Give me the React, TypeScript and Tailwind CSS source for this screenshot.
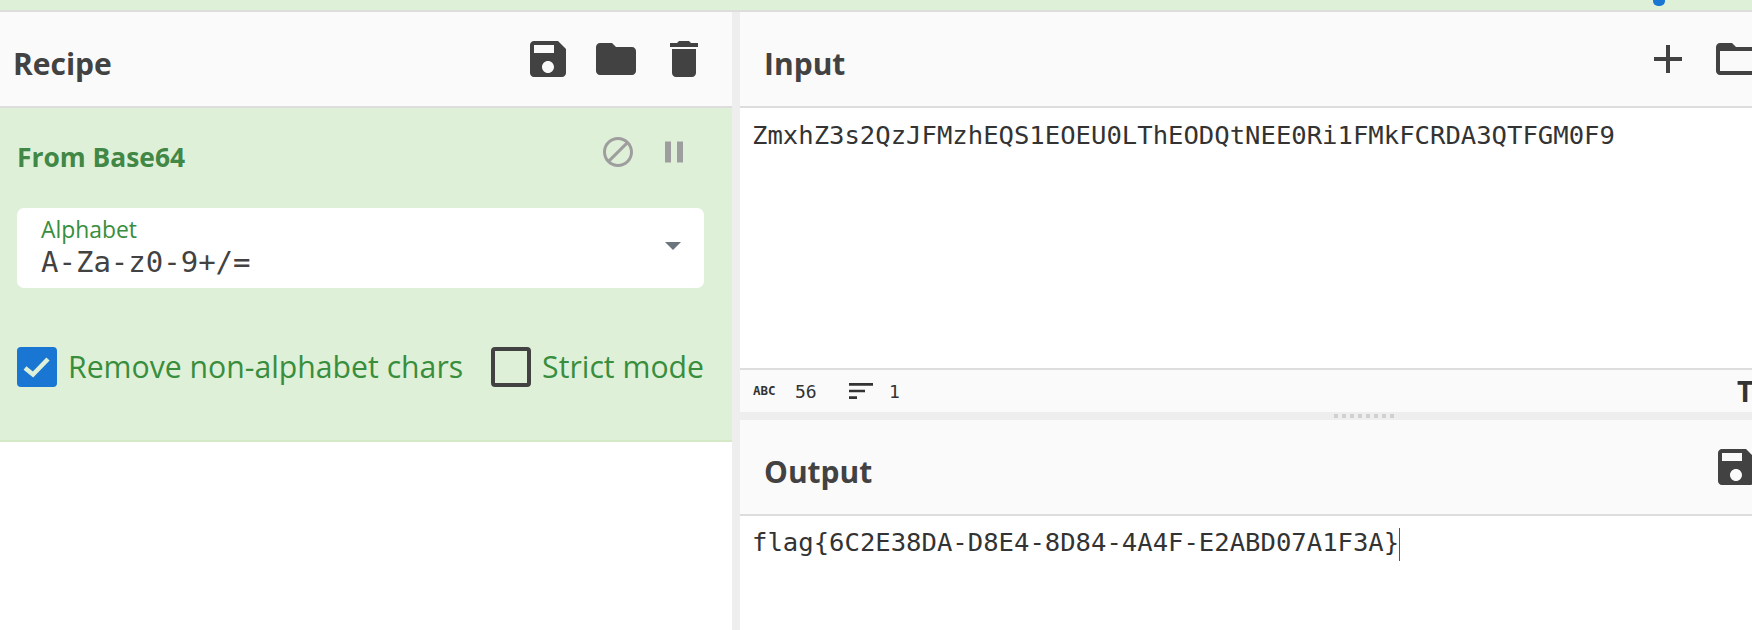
import React from 'react';

const SANS = 'font-["Open_Sans","Noto_Sans",sans-serif]';
const MONO = 'font-["DejaVu_Sans_Mono",monospace]';

const Icon: React.FC<{ d: string; className: string }> = ({ d, className }) => (
  <svg viewBox="0 0 24 24" fill="currentColor" className={className}>
    <path d={d} />
  </svg>
);

const SAVE = 'M17 3H5c-1.11 0-2 .9-2 2v14c0 1.1.89 2 2 2h14c1.1 0 2-.9 2-2V7l-4-4zm-5 16c-1.66 0-3-1.34-3-3s1.34-3 3-3 3 1.34 3 3-1.34 3-3 3zm3-10H5V5h10v4z';
const FOLDER = 'M10 4H4c-1.1 0-1.99.9-1.99 2L2 18c0 1.1.9 2 2 2h16c1.1 0 2-.9 2-2V8c0-1.1-.9-2-2-2h-8l-2-2z';
const FOLDER_OPEN = 'M20 6h-8l-2-2H4c-1.1 0-1.99.9-1.99 2L2 18c0 1.1.9 2 2 2h16c1.1 0 2-.9 2-2V8c0-1.1-.9-2-2-2zm0 12H4V8h16v10z';
const TRASH = 'M6 19c0 1.1.9 2 2 2h8c1.1 0 2-.9 2-2V7H6v12zM19 4h-3.5l-1-1h-5l-1 1H5v2h14V4z';
const PLUS = 'M19 13h-6v6h-2v-6H5v-2h6V5h2v6h6v2z';
const BLOCK = 'M12 2C6.48 2 2 6.48 2 12s4.48 10 10 10 10-4.48 10-10S17.52 2 12 2zM4 12c0-4.42 3.58-8 8-8 1.85 0 3.55.63 4.9 1.69L5.69 16.9C4.63 15.55 4 13.85 4 12zm8 8c-1.85 0-3.55-.63-4.9-1.69L18.31 7.1C19.37 8.45 20 10.15 20 12c0 4.42-3.58 8-8 8z';
const PAUSE = 'M6 19h4V5H6v14zm8-14v14h4V5h-4z';
const SORT = 'M3 18h6v-2H3v2zM3 6v2h18V6H3zm0 7h12v-2H3v2z';

export default function App() {
  return (
    <div className={`relative w-[1752px] h-[630px] overflow-hidden bg-white text-[#424242] ${SANS}`}>
      {/* top strip */}
      <div className="h-[12px] bg-[#dff0d8] border-b-2 border-[#dddddd]" />
      <div className="absolute top-0 left-[1653px] w-[12px] h-[6px] bg-[#1976d2] rounded-b-[5px]" />

      <div className="flex h-[618px]">
        {/* recipe column */}
        <div className="w-[732px] shrink-0 flex flex-col">
          <div className="h-[96px] shrink-0 bg-[#fafafa] border-b-2 border-[#dddddd] flex items-center justify-between pl-[13px] pr-[24px]">
            <div className="mt-[9px] text-[30px] font-bold leading-none">Recipe</div>
            <div className="flex gap-[20px] text-[#424242]">
              <Icon d={SAVE} className="w-[48px] h-[48px]" />
              <Icon d={FOLDER} className="w-[48px] h-[48px]" />
              <Icon d={TRASH} className="w-[48px] h-[48px]" />
            </div>
          </div>

          <div className="h-[334px] shrink-0 bg-[#dff0d8] border-b-2 border-[#d6e9c6] pl-[17px] pr-[28px]">
            <div className="h-[100px] flex items-center justify-between pr-[12px]">
              <div className="text-[26.4px] font-bold text-[#418745]">From Base64</div>
              <div className="flex gap-[20px] text-[#9e9e9e] -mt-[12px]">
                <Icon d={BLOCK} className="w-[36px] h-[36px]" />
                <Icon d={PAUSE} className="w-[36px] h-[36px]" />
              </div>
            </div>

            <div className="h-[80px] bg-white rounded-[7px] pl-[24px] pr-[23px] flex items-center justify-between">
              <div>
                <div className="text-[22.9px] leading-[23px] text-[#388e3c] -mt-[2px]">Alphabet</div>
                <div className={`text-[29px] leading-[36px] mt-[3px] -mb-[3px] ${MONO}`}>A-Za-z0-9+/=</div>
              </div>
              <div className="w-0 h-0 border-x-[8px] border-x-transparent border-t-[8px] border-t-[#6c757d] -mt-[4px]" />
            </div>

            <div className="flex items-center mt-[58px] text-[30.2px] text-[#388e3c] whitespace-nowrap">
              <div className="w-[40px] h-[40px] shrink-0 rounded-[4px] bg-[#1976d2]">
                <svg viewBox="0 0 40 40" fill="none" className="w-[40px] h-[40px]">
                  <path d="M8 21l8 6.5L31 12" stroke="#dff0d8" strokeWidth="4.5" />
                </svg>
              </div>
              <div className="ml-[11px] leading-[40px] pt-[1px]">Remove non-alphabet chars</div>
              <div className="ml-[28px] w-[40px] h-[40px] shrink-0 rounded-[4px] border-[4px] border-[#424242]" />
              <div className="ml-[11px] leading-[40px] pt-[1px]">Strict mode</div>
            </div>
          </div>
        </div>

        {/* gutter */}
        <div className="w-[8px] shrink-0 bg-[#eeeeee]" />

        {/* input / output column */}
        <div className="flex-1 min-w-0 flex flex-col">
          <div className="h-[96px] shrink-0 bg-[#fafafa] border-b-2 border-[#dddddd] flex items-center pl-[24px]">
            <div className="mt-[9px] text-[30px] font-bold leading-none">Input</div>
            <div className="ml-auto flex gap-[20px] mr-[-8px]">
              <Icon d={PLUS} className="w-[48px] h-[48px]" />
              <Icon d={FOLDER_OPEN} className="w-[48px] h-[48px]" />
            </div>
          </div>
          <div className={`h-[260px] shrink-0 pl-[12px] pt-[10px] text-[25.6px] leading-[34px] text-[#333333] ${MONO}`}>
            ZmxhZ3s2QzJFMzhEQS1EOEU0LThEODQtNEE0Ri1FMkFCRDA3QTFGM0F9
          </div>
          <div className={`h-[44px] shrink-0 bg-[#fafafa] border-t-2 border-[#dddddd] flex items-center text-[18px] text-[#333333] whitespace-nowrap ${MONO}`}>
            <span className="ml-[13px] w-[42px] text-[12.5px] font-bold">ABC</span>
            <span className="w-[50px]">56</span>
            <Icon d={SORT} className="w-[32px] h-[32px] text-[#333333]" />
            <span className="ml-[12px]">1</span>
            <span className={`absolute left-[1737px] text-[28px] font-bold ${SANS}`}>Tr</span>
          </div>
          <div className="h-[8px] shrink-0 bg-[#eeeeee] flex items-center gap-[4px] pl-[594px]">
            {[0, 1, 2, 3, 4, 5, 6, 7].map((i) => (
              <span key={i} className="w-[4px] h-[4px] bg-[#d0d0d0]" />
            ))}
          </div>
          <div className="h-[96px] shrink-0 bg-[#fafafa] border-b-2 border-[#dddddd] flex items-center pl-[24px]">
            <div className="mt-[9px] text-[30px] font-bold leading-none">Output</div>
            <Icon d={SAVE} className="ml-auto mr-[-8px] w-[48px] h-[48px]" />
          </div>
          <div className={`flex-1 pl-[12px] pt-[9px] text-[25.6px] leading-[34px] text-[#333333] ${MONO}`}>
            flag{'{'}6C2E38DA-D8E4-8D84-4A4F-E2ABD07A1F3A{'}'}
            <span className="inline-block w-[1px] h-[33px] bg-[#555555] align-middle" />
          </div>
        </div>
      </div>
    </div>
  );
}
